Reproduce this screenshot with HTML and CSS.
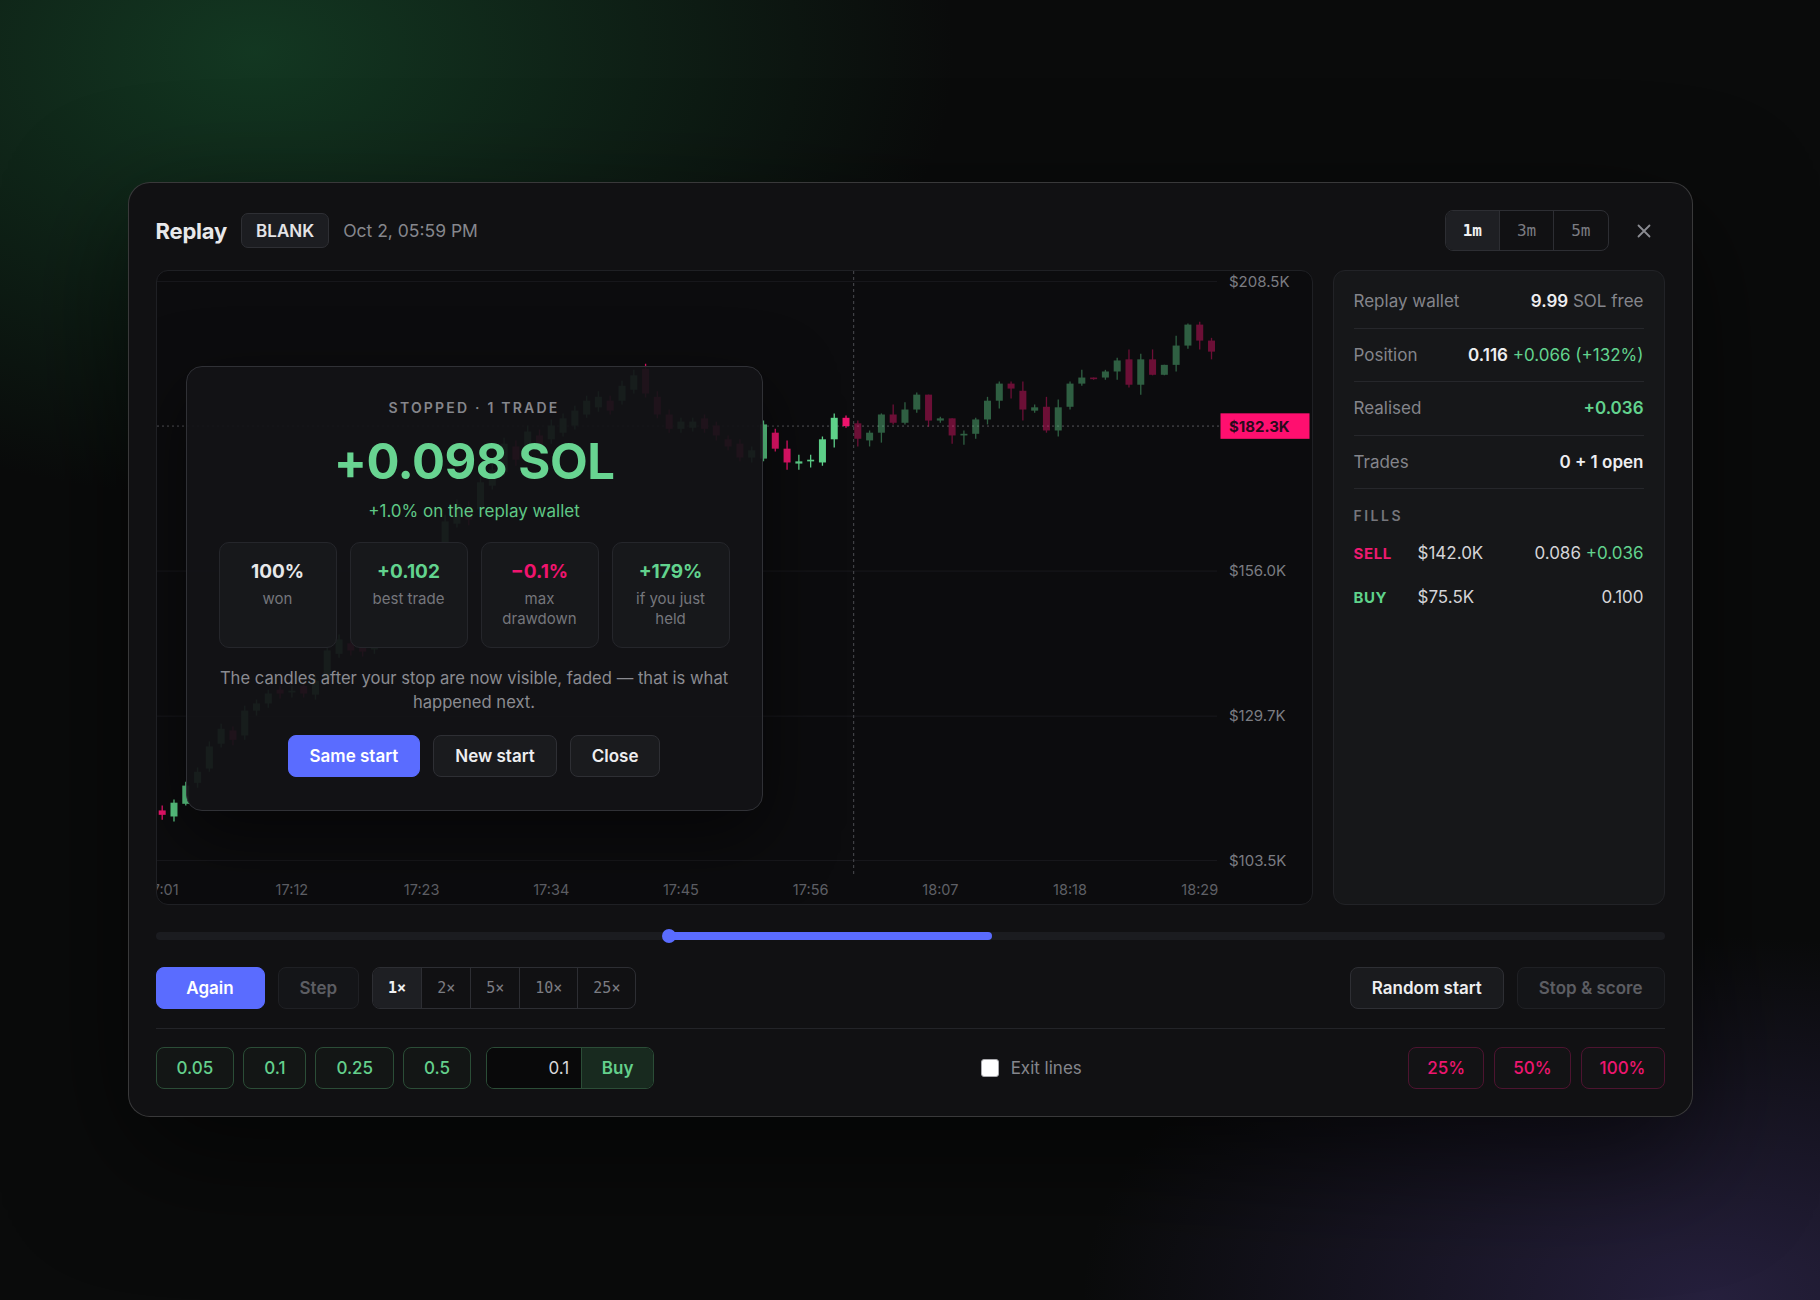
FILE: index.html
```html
<!DOCTYPE html>
<html lang="en">
<head>
    <meta charset="UTF-8">
    <meta name="viewport" content="width=device-width, initial-scale=1.0">
    <title>Replay</title>
    <link rel="stylesheet" href="styles.css">
</head>
<body>

    <div class="replay">
        <!-- Header -->
        <div class="replay-header">
            <div class="header-left">
                <h1>Replay</h1>
                <span class="badge">BLANK</span>
                <span class="stamp">Oct 2, 05:59 PM</span>
            </div>
            <div class="header-right">
                <div class="segmented timeframes">
                    <button class="active">1m</button>
                    <button>3m</button>
                    <button>5m</button>
                </div>
                <button class="close-btn" aria-label="Close">
                    <svg width="16" height="16" viewBox="0 0 16 16"><path d="M2.5 2.5l11 11M13.5 2.5l-11 11" stroke="currentColor" stroke-width="1.8" stroke-linecap="round"/></svg>
                </button>
            </div>
        </div>

        <!-- Chart + wallet -->
        <div class="replay-main">
            <div class="chart">
                <svg id="chartSvg" width="1155" height="633"></svg>

                <div class="result">
                    <div class="result-kicker">STOPPED · 1 TRADE</div>
                    <div class="result-amount">+0.098 SOL</div>
                    <div class="result-sub">+1.0% on the replay wallet</div>

                    <div class="result-stats">
                        <div class="stat-card">
                            <div class="stat-value">100%</div>
                            <div class="stat-label">won</div>
                        </div>
                        <div class="stat-card">
                            <div class="stat-value up">+0.102</div>
                            <div class="stat-label">best trade</div>
                        </div>
                        <div class="stat-card">
                            <div class="stat-value down">&minus;0.1%</div>
                            <div class="stat-label">max<br>drawdown</div>
                        </div>
                        <div class="stat-card">
                            <div class="stat-value up">+179%</div>
                            <div class="stat-label">if you just<br>held</div>
                        </div>
                    </div>

                    <p class="result-note">The candles after your stop are now visible, faded — that is what happened next.</p>

                    <div class="result-actions">
                        <button class="btn btn-primary">Same start</button>
                        <button class="btn">New start</button>
                        <button class="btn">Close</button>
                    </div>
                </div>
            </div>

            <aside class="wallet">
                <div class="wallet-row">
                    <span class="wallet-label">Replay wallet</span>
                    <span><b>9.99</b> <span class="dim">SOL free</span></span>
                </div>
                <div class="wallet-row">
                    <span class="wallet-label">Position</span>
                    <span><b>0.116</b> <span class="up">+0.066 (+132%)</span></span>
                </div>
                <div class="wallet-row">
                    <span class="wallet-label">Realised</span>
                    <b class="up">+0.036</b>
                </div>
                <div class="wallet-row">
                    <span class="wallet-label">Trades</span>
                    <b>0 + 1 open</b>
                </div>

                <div class="fills-title">FILLS</div>
                <div class="fill-row">
                    <span class="fill-side sell">SELL</span>
                    <span class="fill-price">$142.0K</span>
                    <span class="fill-amount">0.086 <span class="up">+0.036</span></span>
                </div>
                <div class="fill-row">
                    <span class="fill-side buy">BUY</span>
                    <span class="fill-price">$75.5K</span>
                    <span class="fill-amount">0.100</span>
                </div>
            </aside>
        </div>

        <!-- Replay range -->
        <div class="scrubber">
            <div class="scrubber-fill" style="left: 34%; width: 21.46%;"></div>
            <span class="scrubber-knob" style="left: 34%;"></span>
        </div>

        <!-- Playback -->
        <div class="controls">
            <div class="control-group">
                <button class="btn btn-primary btn-again">Again</button>
                <button class="btn btn-muted">Step</button>
                <div class="segmented speed">
                    <button class="active">1×</button>
                    <button>2×</button>
                    <button>5×</button>
                    <button>10×</button>
                    <button>25×</button>
                </div>
            </div>
            <div class="control-group">
                <button class="btn">Random start</button>
                <button class="btn btn-muted">Stop &amp; score</button>
            </div>
        </div>

        <!-- Orders -->
        <div class="orders">
            <div class="size-group">
                <button class="size-btn">0.05</button>
                <button class="size-btn">0.1</button>
                <button class="size-btn">0.25</button>
                <button class="size-btn">0.5</button>
                <div class="buy-group">
                    <input type="text" class="buy-input" value="0.1">
                    <button class="buy-btn">Buy</button>
                </div>
            </div>

            <label class="exit-toggle">
                <input type="checkbox">
                Exit lines
            </label>

            <div class="pct-group">
                <button class="pct-btn">25%</button>
                <button class="pct-btn">50%</button>
                <button class="pct-btn">100%</button>
            </div>
        </div>
    </div>

    <script>
        // 1m candles from 17:01, [open, high, low, close] in $K
        const candles = [
            [112.6,113.5,110.9,111.8], [111.5,114.6,110.6,114.0], [113.8,117.8,113.5,117.1],
            [117.6,120.4,116.7,119.6], [120.2,125.1,119.6,124.2], [124.7,128.3,124.0,127.4],
            [127.1,127.8,124.4,125.4], [126.2,131.6,125.4,130.7], [130.7,132.7,129.8,132.0],
            [132.0,134.5,131.2,133.8], [134.5,135.2,132.9,133.8], [134.0,135.2,133.1,134.3],
            [135.2,136.0,133.1,133.8], [133.6,137.0,132.7,136.1], [136.5,142.5,135.8,141.6],
            [141.0,144.5,140.3,143.6], [142.9,143.6,140.7,141.6], [142.5,143.4,140.5,141.4],
            [141.8,145.9,141.0,145.0], [145.0,150.1,144.3,149.0], [148.7,149.7,145.8,146.8],
            [148.7,154.5,147.8,153.6], [153.0,158.1,152.3,157.2], [156.6,157.7,153.6,154.5],
            [156.3,166.2,155.6,165.0], [164.6,169.0,163.9,168.1], [167.5,168.6,164.3,165.3],
            [167.2,173.0,166.4,172.1], [171.5,175.5,170.8,174.4], [174.0,180.2,173.3,179.1],
            [178.6,179.7,175.1,176.2], [177.7,182.4,176.9,181.3], [180.6,181.7,177.7,178.8],
            [179.9,183.5,179.1,182.4], [181.1,184.6,180.4,183.7], [182.4,186.0,181.7,185.1],
            [184.4,187.8,183.8,186.9], [185.7,188.6,184.9,187.6], [186.9,187.8,184.4,185.1],
            [186.9,190.5,186.2,189.6], [188.9,192.5,188.2,191.5], [192.7,193.6,187.5,188.2],
            [187.6,188.6,183.7,184.4], [184.4,185.3,181.1,181.8], [181.8,183.8,181.1,183.1],
            [182.0,183.8,181.3,183.1], [183.7,184.4,181.1,181.8], [182.4,183.1,179.7,180.6],
            [179.9,180.6,177.9,178.6], [179.1,179.9,175.9,176.6], [176.6,178.6,175.7,177.9],
            [176.4,183.3,175.9,182.6], [181.1,181.8,177.7,178.2], [178.2,179.7,174.4,175.7],
            [175.5,177.1,174.4,175.9], [175.9,177.1,174.8,176.2], [175.7,180.4,175.1,179.9],
            [179.9,184.6,178.4,183.8], [183.8,184.2,182.0,182.3], [182.8,183.3,178.6,180.0],
            [179.7,181.5,178.6,181.1], [181.1,184.6,179.3,184.4], [184.4,186.2,182.6,182.9],
            [182.9,186.6,182.6,185.3], [185.3,188.4,184.7,188.0], [188.0,188.0,182.2,183.3],
            [183.3,184.0,182.9,183.7], [183.7,183.7,179.1,180.6], [180.6,181.5,178.9,180.9],
            [180.9,183.8,180.0,183.5], [183.5,187.6,182.6,186.9], [186.9,190.4,185.5,190.0],
            [190.0,190.4,187.3,189.1], [188.7,190.4,183.3,185.3], [185.1,186.2,184.7,185.7],
            [185.8,187.6,181.1,181.5], [181.5,187.1,180.4,185.7], [185.8,190.4,185.3,190.0],
            [190.0,192.5,189.6,191.1], [191.1,191.1,190.7,190.9], [191.1,192.5,190.7,192.2],
            [192.2,194.7,190.7,194.2], [194.4,196.2,189.3,189.8], [189.8,195.4,188.0,194.4],
            [194.4,196.2,191.5,191.6], [191.6,193.4,191.5,193.4], [193.4,198.7,192.2,196.9],
            [196.9,200.9,196.3,200.7], [200.7,201.2,196.2,197.8], [197.8,198.3,194.4,195.8]
        ];
        const stopAt = 59;      // candles played before the stop
        const lastPrice = 182.3;

        const svg = document.getElementById('chartSvg');
        const priceTop = 208.5, priceBottom = 103.5;
        const plotTop = 10.6, plotHeight = 579, plotRight = 1060;
        const x0 = 5.2, step = 11.79, bodyWidth = 7;

        const y = p => plotTop + (priceTop - p) / (priceTop - priceBottom) * plotHeight;
        const x = i => x0 + i * step;

        let grid = '', labels = '', played = '', after = '';

        // Price levels
        [208.5, 156.0, 129.7, 103.5].forEach(p => {
            grid += `<line x1="0" x2="${plotRight}" y1="${y(p)}" y2="${y(p)}" class="grid-line"/>`;
            labels += `<text x="1072" y="${y(p) + 5}" class="axis-price">$${p.toFixed(1)}K</text>`;
        });

        // Time axis, every 11 minutes
        for (let i = 0; i < candles.length; i += 11) {
            const min = 1 + i;
            const label = (17 + Math.floor(min / 60)) + ':' + String(min % 60).padStart(2, '0');
            labels += `<text x="${x(i)}" y="623.5" class="axis-time">${label}</text>`;
        }

        candles.forEach((c, i) => {
            const [o, h, l, cl] = c;
            const color = cl >= o ? '#5fd38b' : '#f0146e';
            const top = Math.min(y(o), y(cl));
            const height = Math.max(Math.abs(y(o) - y(cl)), 1.6);
            const cx = x(i);
            const shape = `<line x1="${cx}" x2="${cx}" y1="${y(h)}" y2="${y(l)}" stroke="${color}" stroke-width="1.3"/>` +
                `<rect x="${cx - bodyWidth / 2}" y="${top}" width="${bodyWidth}" height="${height}" fill="${color}"/>`;
            if (i < stopAt) played += shape; else after += shape;
        });

        const stopX = x0 + (stopAt - 0.35) * step;
        const lastY = y(lastPrice);

        svg.innerHTML =
            `<g>${grid}</g>` +
            `<line x1="${stopX}" x2="${stopX}" y1="0" y2="603" class="stop-line"/>` +
            `<line x1="0" x2="1064" y1="${lastY}" y2="${lastY}" class="price-line"/>` +
            `<g class="faded">${after}</g>` +
            `<g>${played}</g>` +
            `<g>${labels}</g>` +
            `<rect x="1063.5" y="${lastY - 12.75}" width="89" height="25.5" class="price-tag"/>` +
            `<text x="1072" y="${lastY + 5.5}" class="price-tag-text">$${lastPrice.toFixed(1)}K</text>`;
    </script>

</body>
</html>
```

FILE: styles.css
```css
body {
    margin: 0;
    min-height: 1300px;
    font-family: Inter, "Noto Sans", sans-serif;
    color: #e8e8ea;
    background:
        radial-gradient(ellipse 1000px 640px at 14% 4%, rgba(26, 92, 52, 0.55), rgba(26, 92, 52, 0) 70%),
        radial-gradient(ellipse 900px 520px at 94% 100%, rgba(76, 60, 130, 0.42), rgba(76, 60, 130, 0) 70%),
        #0a0b0b;
    overflow: hidden;
}
button, input {
    font-family: inherit;
}
.up { color: #62d38e; }
.down { color: #f0146e; }
.dim { color: #85868c; }

.replay {
    width: 1565px;
    margin: 182px auto 0;
    box-sizing: border-box;
    padding: 27px;
    background-color: #111113;
    border: 1px solid rgba(255, 255, 255, 0.17);
    border-radius: 22px;
    box-shadow: 0 40px 120px rgba(0, 0, 0, 0.6);
}

/* Header */
.replay-header {
    display: flex;
    justify-content: space-between;
    align-items: center;
    height: 41px;
    margin-bottom: 19px;
}
.header-left, .header-right {
    display: flex;
    align-items: center;
    gap: 14px;
}
.header-right {
    gap: 21px;
}
h1 {
    margin: 0;
    font-size: 22px;
    font-weight: 700;
    letter-spacing: -0.2px;
}
.badge {
    display: inline-flex;
    align-items: center;
    height: 35px;
    box-sizing: border-box;
    padding: 0 14px;
    background-color: #1c1d21;
    border: 1px solid #2e2f34;
    border-radius: 7px;
    font-size: 17px;
    font-weight: 600;
    color: #e4e4e7;
}
.stamp {
    font-size: 17.5px;
    color: #86878d;
}
.segmented {
    display: flex;
    border: 1px solid #2d2e33;
    border-radius: 8px;
    overflow: hidden;
}
.segmented button {
    height: 39px;
    padding: 0 17px;
    background: transparent;
    border: none;
    border-left: 1px solid #2d2e33;
    color: #7b7c82;
    font-family: "DejaVu Sans Mono", monospace;
    font-size: 16px;
    cursor: pointer;
}
.segmented button:first-child {
    border-left: none;
}
.segmented button.active {
    background-color: #1e1f23;
    color: #f0f0f2;
    font-weight: 700;
}
.close-btn {
    display: flex;
    align-items: center;
    justify-content: center;
    width: 28px;
    height: 28px;
    margin-right: 7px;
    padding: 0;
    background: none;
    border: none;
    color: #8b8c92;
    cursor: pointer;
}

/* Chart + wallet */
.replay-main {
    display: grid;
    grid-template-columns: 1157px 332px;
    gap: 20px;
    height: 635px;
}
.chart {
    position: relative;
    background-color: #0c0c0e;
    border: 1px solid #1f2024;
    border-radius: 12px;
    overflow: hidden;
}
.chart svg {
    display: block;
}
.grid-line {
    stroke: #19191d;
    stroke-width: 1;
}
.stop-line {
    stroke: #4a4b50;
    stroke-width: 1;
    stroke-dasharray: 3 3;
}
.price-line {
    stroke: #55565b;
    stroke-width: 1;
    stroke-dasharray: 2 3;
}
.faded {
    opacity: 0.42;
}
.axis-price {
    fill: #7b7c82;
    font-size: 15px;
}
.axis-time {
    fill: #5f6066;
    font-size: 14.5px;
    text-anchor: middle;
}
.price-tag {
    fill: #ff0f6f;
}
.price-tag-text {
    fill: #2a0a1c;
    font-size: 15px;
    font-weight: 700;
}

/* Result overlay */
.result {
    position: absolute;
    left: 29px;
    top: 95px;
    width: 577px;
    box-sizing: border-box;
    padding: 31px 32px 33px;
    background-color: rgba(19, 19, 22, 0.95);
    border: 1px solid #303136;
    border-radius: 16px;
    box-shadow: 0 24px 70px rgba(0, 0, 0, 0.55);
    text-align: center;
}
.result-kicker {
    font-size: 14px;
    font-weight: 600;
    letter-spacing: 2.2px;
    line-height: 20px;
    color: #85868c;
}
.result-amount {
    margin-top: 16px;
    font-size: 49px;
    font-weight: 700;
    line-height: 56px;
    letter-spacing: -0.5px;
    color: #68d491;
}
.result-sub {
    margin-top: 10px;
    font-size: 17px;
    line-height: 22px;
    color: #5fc886;
}
.result-stats {
    display: grid;
    grid-template-columns: repeat(4, 1fr);
    gap: 13px;
    margin-top: 20px;
}
.stat-card {
    height: 106px;
    box-sizing: border-box;
    padding: 17px 8px 0;
    background-color: #17181b;
    border: 1px solid #25262b;
    border-radius: 10px;
}
.stat-value {
    font-size: 19px;
    font-weight: 700;
    line-height: 24px;
}
.stat-label {
    margin-top: 5px;
    font-size: 15px;
    line-height: 20px;
    color: #75767c;
}
.result-note {
    margin: 18px 0 0;
    font-size: 16.6px;
    line-height: 24.4px;
    color: #8a8b91;
}
.result-actions {
    display: flex;
    justify-content: center;
    gap: 13px;
    margin-top: 20px;
}

/* Buttons */
.btn {
    height: 42px;
    box-sizing: border-box;
    padding: 0 21px;
    background-color: #1a1b1e;
    border: 1px solid #2e2f34;
    border-radius: 8px;
    color: #eeeef0;
    font-size: 17px;
    font-weight: 600;
    cursor: pointer;
}
.btn-primary {
    background-color: #5a6cff;
    border-color: #5a6cff;
    color: #fff;
}
.btn-muted {
    background-color: #141518;
    border-color: #1f2024;
    color: #5c5d62;
}
.btn-again {
    min-width: 109px;
}

/* Wallet */
.wallet {
    padding: 4px 20px 0;
    background-color: #161719;
    border: 1px solid #222327;
    border-radius: 12px;
}
.wallet-row {
    display: flex;
    justify-content: space-between;
    align-items: center;
    height: 53.5px;
    box-sizing: border-box;
    border-bottom: 1px solid #26272b;
    font-size: 17px;
    color: #eeeef0;
}
.wallet-row b {
    font-weight: 600;
}
.wallet-label {
    color: #84858b;
}
.fills-title {
    margin-top: 18px;
    font-size: 14px;
    font-weight: 600;
    line-height: 18px;
    letter-spacing: 2.5px;
    color: #75767c;
}
.fill-row {
    display: grid;
    grid-template-columns: 64px 1fr auto;
    align-items: center;
    height: 44px;
}
.fills-title + .fill-row {
    margin-top: 6px;
}
.fill-side {
    font-size: 15px;
    font-weight: 700;
    letter-spacing: 0.6px;
}
.fill-side.sell { color: #ee1a70; }
.fill-side.buy { color: #5fd38b; }
.fill-price, .fill-amount {
    font-size: 17px;
    color: #d4d4d7;
}

/* Scrubber */
.scrubber {
    position: relative;
    height: 8px;
    margin: 27px 0;
    background-color: #1b1c20;
    border-radius: 4px;
}
.scrubber-fill {
    position: absolute;
    top: 0;
    bottom: 0;
    background-color: #5a6cff;
    border-radius: 4px;
}
.scrubber-knob {
    position: absolute;
    top: 50%;
    width: 14px;
    height: 14px;
    margin: -7px 0 0 -7px;
    background-color: #5a6cff;
    border-radius: 50%;
}

/* Playback controls */
.controls {
    display: flex;
    justify-content: space-between;
    align-items: center;
    padding-bottom: 19px;
    border-bottom: 1px solid #232428;
}
.control-group {
    display: flex;
    align-items: center;
    gap: 13px;
}
.speed button {
    height: 40px;
    padding: 0 15px;
    font-size: 15px;
}

/* Orders */
.orders {
    display: flex;
    justify-content: space-between;
    align-items: center;
    padding-top: 18px;
}
.size-group {
    display: flex;
    gap: 9px;
}
.size-btn {
    height: 42px;
    padding: 0 20px;
    background-color: #131615;
    border: 1px solid #2b4d37;
    border-radius: 8px;
    color: #64d08c;
    font-size: 17px;
    font-weight: 500;
    cursor: pointer;
}
.buy-group {
    display: flex;
    height: 42px;
    box-sizing: border-box;
    margin-left: 6px;
    border: 1px solid #2b4d37;
    border-radius: 8px;
    overflow: hidden;
}
.buy-input {
    width: 94px;
    box-sizing: border-box;
    padding: 0 12px;
    background-color: #09090a;
    border: none;
    outline: none;
    color: #d8d8da;
    font-size: 17px;
    text-align: right;
}
.buy-btn {
    width: 72px;
    background-color: #182a1f;
    border: none;
    border-left: 1px solid #2b4d37;
    color: #64d08c;
    font-size: 17px;
    font-weight: 600;
    cursor: pointer;
}
.exit-toggle {
    display: flex;
    align-items: center;
    gap: 12px;
    font-size: 17px;
    color: #85868c;
}
.exit-toggle input {
    appearance: none;
    width: 18px;
    height: 18px;
    margin: 0;
    background-color: #fff;
    border: 1px solid #a9a9ad;
    border-radius: 3px;
}
.pct-group {
    display: flex;
    gap: 10px;
}
.pct-btn {
    height: 42px;
    padding: 0 18px;
    background-color: #131315;
    border: 1px solid #4d1430;
    border-radius: 8px;
    color: #ee1670;
    font-size: 17px;
    font-weight: 500;
    cursor: pointer;
}
```
